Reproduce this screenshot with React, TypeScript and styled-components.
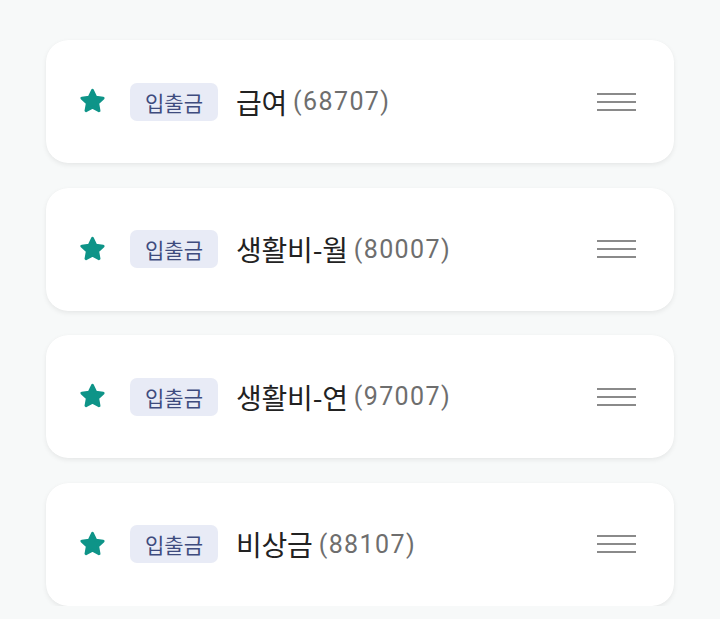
import React from "react";
import styled, { createGlobalStyle } from "styled-components";

const Global = createGlobalStyle`
  html, body { margin: 0; padding: 0; background: #f7f9f9; }
  body { font-family: Roboto, "Noto Sans CJK KR", sans-serif; }
`;

const Page = styled.div`
  display: flex;
  flex-direction: column;
  gap: 24.5px;
  padding: 40px 46px 0 46px;
  width: 720px;
  box-sizing: border-box;
`;

const Card = styled.div`
  height: 123px;
  background: #ffffff;
  border-radius: 22px;
  box-shadow: 0 2px 5px rgba(0, 0, 0, 0.07), 0 0 1px rgba(0, 0, 0, 0.04);
  display: flex;
  align-items: center;
  padding: 0 38px 0 31px;
  box-sizing: border-box;
`;

const StarWrap = styled.div`
  width: 30px;
  height: 30px;
  display: flex;
  align-items: center;
  justify-content: center;
  margin-right: 23px;
`;

const Badge = styled.span`
  display: inline-flex;
  align-items: center;
  justify-content: center;
  height: 38px;
  padding: 0 15px;
  border-radius: 7px;
  background: #e8ebf6;
  color: #3e4b7e;
  font-family: "Noto Sans CJK KR", sans-serif;
  font-size: 21px;
  margin-right: 18px;
`;

const Title = styled.span`
  font-family: "Noto Sans CJK KR", sans-serif;
  font-size: 28px;
  color: #222222;
  letter-spacing: -0.2px;
`;

const Code = styled.span`
  font-family: Roboto, sans-serif;
  font-size: 25px;
  color: #6e6e6e;
  margin-left: 6px;
  letter-spacing: 1.4px;
`;

const Spacer = styled.div`
  flex: 1;
`;

const Handle = styled.div`
  width: 39px;
  display: flex;
  flex-direction: column;
  gap: 6px;
`;

const Line = styled.div`
  height: 2px;
  background: #8a8a8a;
`;

const Star = () => (
  <svg width="29" height="29" viewBox="0 0 24 24">
    <path
      d="M12 2.8l2.7 5.6 6.1.8-4.5 4.3 1.1 6.1L12 16.7l-5.4 2.9 1.1-6.1-4.5-4.3 6.1-.8z"
      fill="#0e9488"
      stroke="#0e9488"
      strokeWidth="2.4"
      strokeLinejoin="round"
    />
  </svg>
);

const items = [
  { title: "급여", code: "68707" },
  { title: "생활비-월", code: "80007" },
  { title: "생활비-연", code: "97007" },
  { title: "비상금", code: "88107" },
];

export default function App() {
  return (
    <>
      <Global />
      <Page>
        {items.map((it) => (
          <Card key={it.code}>
            <StarWrap>
              <Star />
            </StarWrap>
            <Badge>입출금</Badge>
            <Title>{it.title}</Title>
            <Code>({it.code})</Code>
            <Spacer />
            <Handle>
              <Line />
              <Line />
              <Line />
            </Handle>
          </Card>
        ))}
      </Page>
    </>
  );
}
